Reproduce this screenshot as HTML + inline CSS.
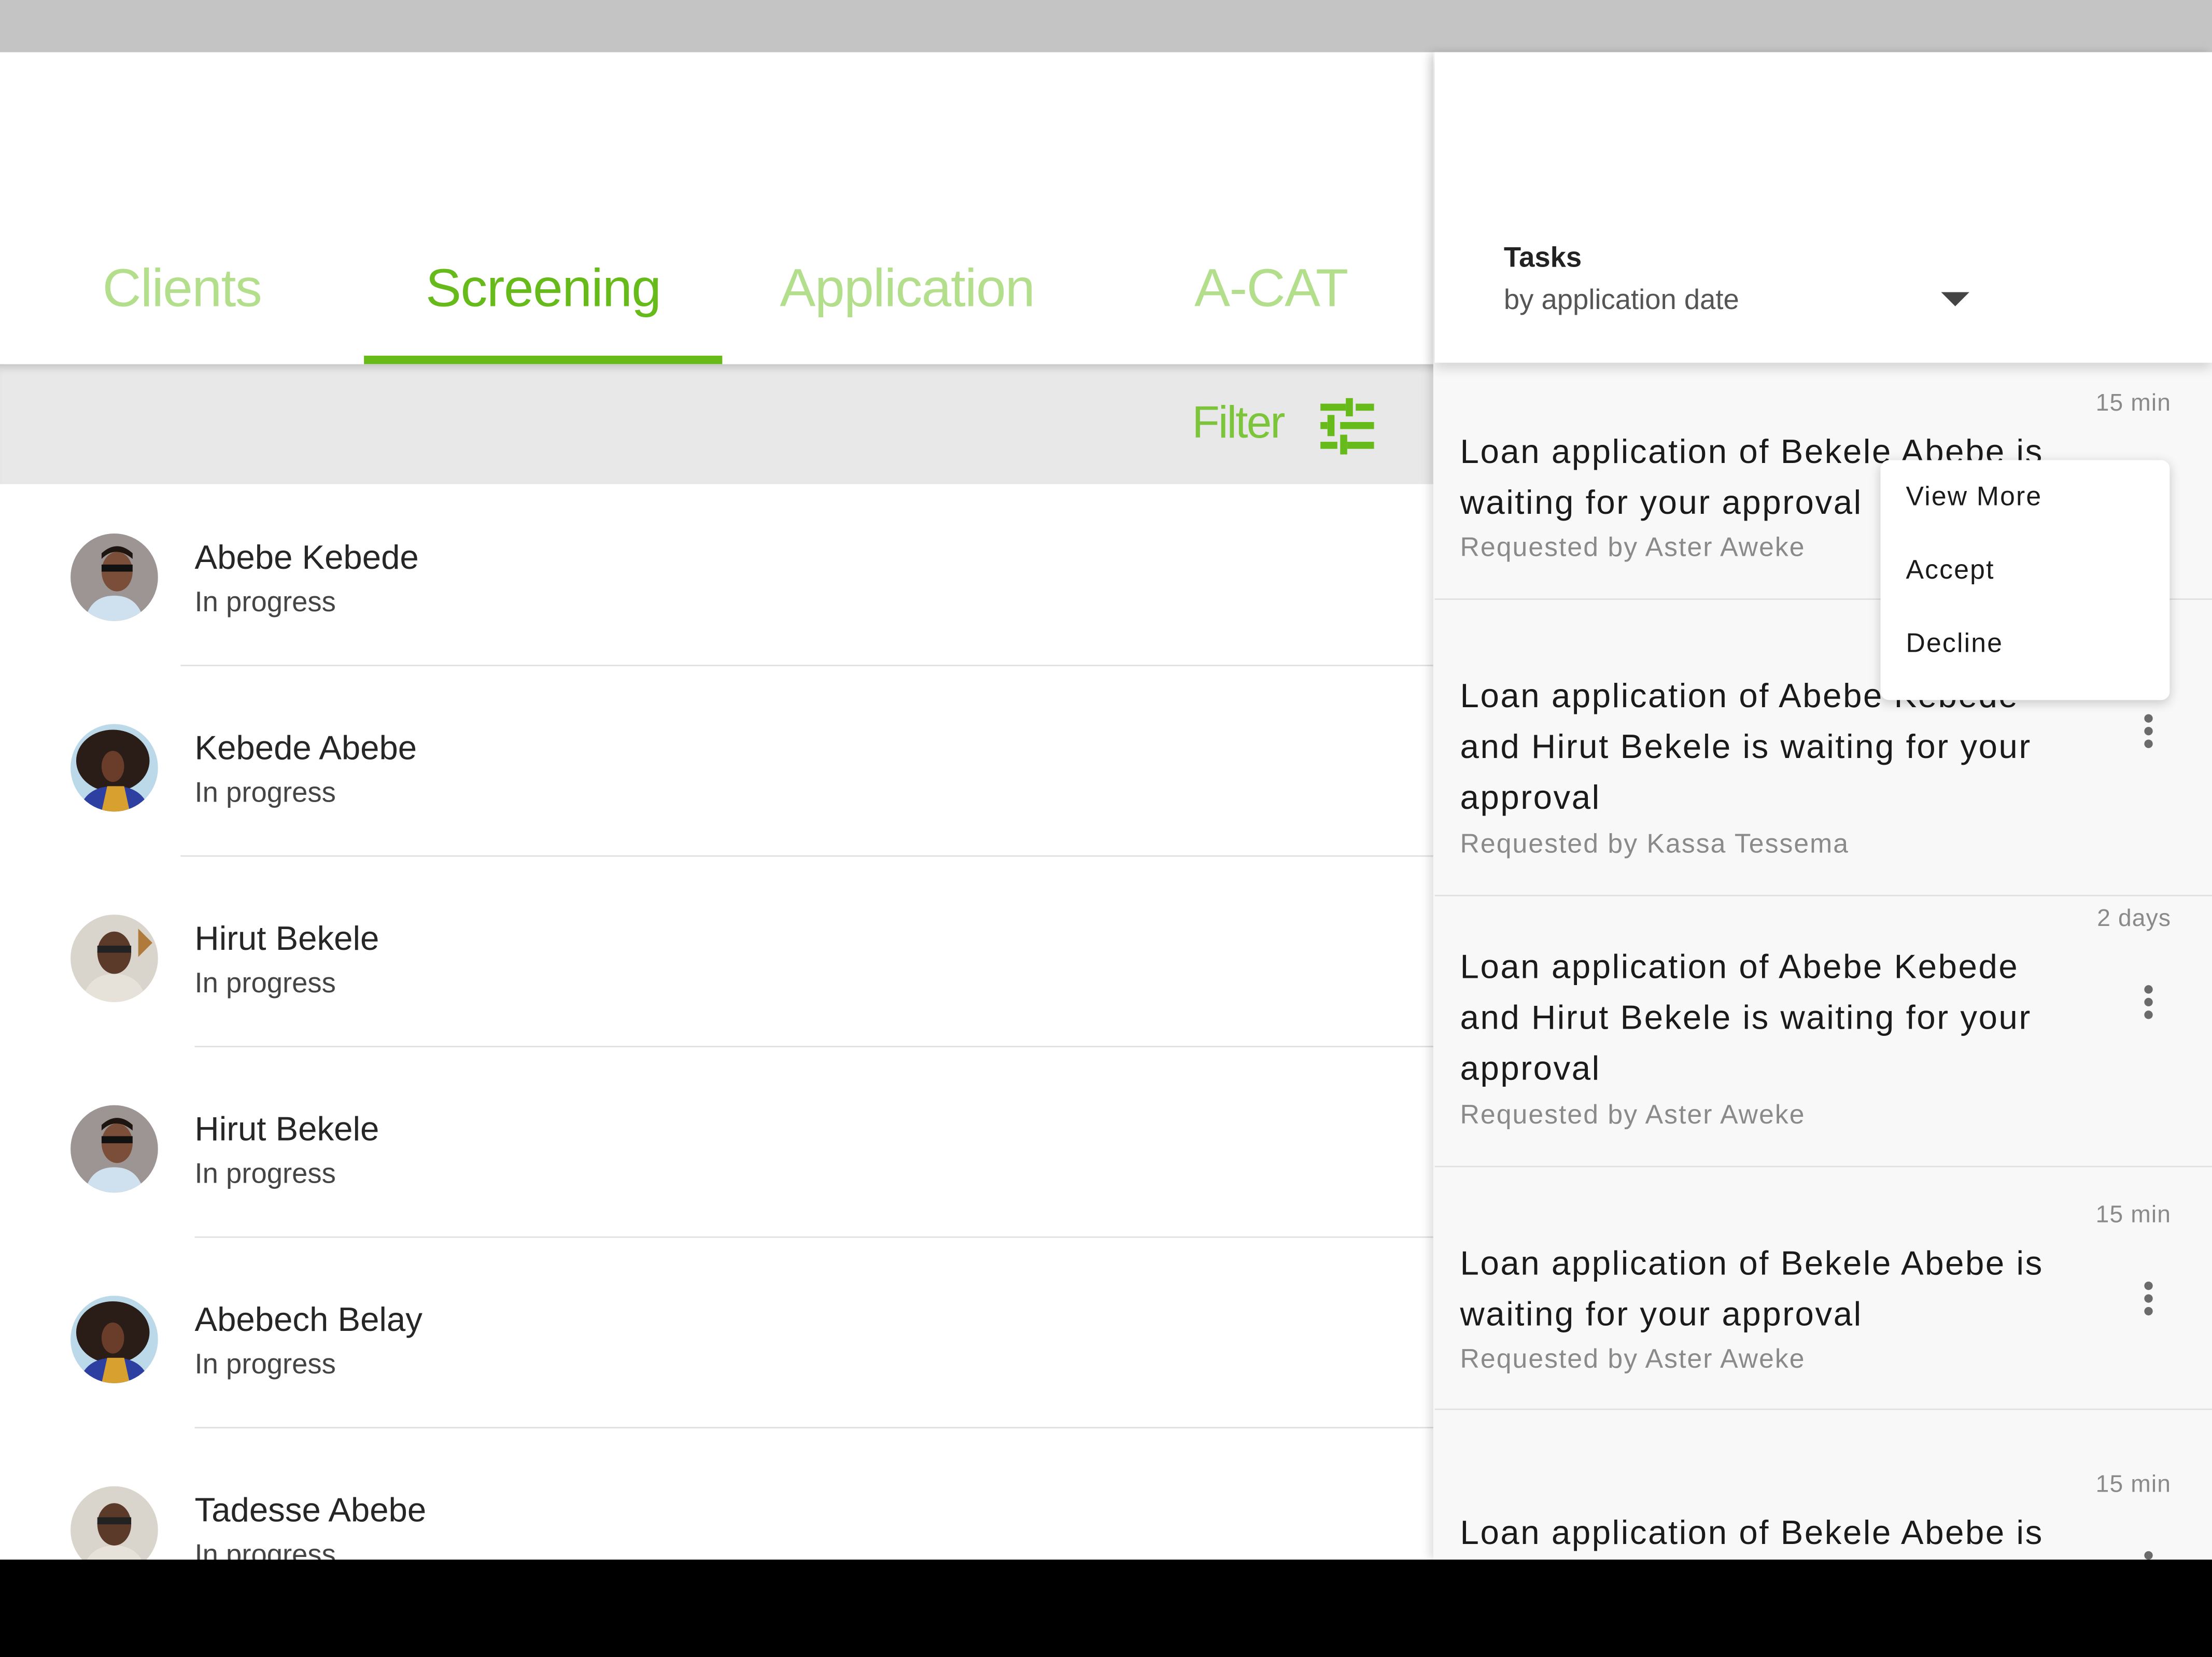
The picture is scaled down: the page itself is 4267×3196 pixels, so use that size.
<!DOCTYPE html>
<html><head><meta charset="utf-8">
<style>
html,body{margin:0;padding:0;width:4267px;height:3196px;overflow:hidden;background:#000;}
#w{position:absolute;left:0;top:0;width:1568px;height:1174px;transform:scale(2.72130,2.72232);transform-origin:0 0;overflow:hidden;font-family:"Liberation Sans",sans-serif;background:#fff;}
.a{position:absolute;white-space:nowrap;}
.tab{position:absolute;top:184px;font-size:38px;color:#b3df8c;width:258px;text-align:center;letter-spacing:-0.5px}
.name{font-size:24px;color:#262626;left:138px;}
.sub{font-size:20px;color:#444;left:138px;}
.div{position:absolute;height:1px;background:#e0e0e0;}
.t{font-size:24px;color:#1a1a1a;left:1035px;letter-spacing:0.95px}
.r{font-size:19px;color:#8a8a8a;left:1035px;letter-spacing:0.75px}
.tm{font-size:17px;color:#8a8a8a;right:29px;letter-spacing:0.4px}
.k{position:absolute;left:1520px;width:6px;height:6px;border-radius:3px;background:#6b6b6b;}
.m{font-size:19px;color:#1a1a1a;left:1351px;letter-spacing:0.8px}
</style></head><body><div id="w">
<div class="a" style="left:0;top:0;width:1568px;height:37px;background:#c4c4c4"></div>
<div class="tab" style="left:0">Clients</div>
<div class="tab" style="left:256px;color:#66bb1a">Screening</div>
<div class="tab" style="left:514px">Application</div>
<div class="tab" style="left:772px">A-CAT</div>
<div class="a" style="left:258px;top:252px;width:254px;height:6px;background:#68ba18"></div>
<div class="a" style="left:0;top:258px;width:1016px;height:85px;background:#e8e8e8;box-shadow:inset 0 6px 6px -4px rgba(0,0,0,0.18)"></div>
<div class="a" style="left:845px;top:281px;font-size:32px;color:#7cc43a;letter-spacing:-1px">Filter</div>
<svg class="a" style="left:934px;top:282px" width="42" height="40" viewBox="0 0 42 40" fill="#66bb1a">
<rect x="2" y="4" width="18" height="5"/><rect x="27" y="4" width="13" height="5"/><rect x="20" y="0" width="5" height="13"/>
<rect x="2" y="17" width="5" height="5"/><rect x="16" y="17" width="24" height="5"/><rect x="7" y="12" width="5" height="15"/>
<rect x="2" y="31" width="12" height="5"/><rect x="21" y="31" width="19" height="5"/><rect x="16" y="26" width="5" height="14"/>
</svg>
<svg width="0" height="0" style="position:absolute"><defs>
<clipPath id="c"><circle cx="31" cy="31" r="31"/></clipPath></defs></svg>
<svg class="a" style="left:50px;top:378px" width="62" height="62"><g clip-path="url(#c)"><rect width="62" height="62" fill="#9c9593"/><path d="M10 62 Q14 44 31 44 Q48 44 52 62Z" fill="#cfe0ee"/><ellipse cx="33" cy="27" rx="11" ry="14" fill="#7a4e38"/><path d="M22 18 Q32 8 44 18 L44 14 Q33 4 22 14Z" fill="#1e1410"/><rect x="22" y="22" width="22" height="5" fill="#111"/></g></svg>
<div class="a name" style="top:382px">Abebe Kebede</div><div class="a sub" style="top:416px">In progress</div>
<div class="div" style="left:128px;top:471px;width:888px"></div>
<svg class="a" style="left:50px;top:513px" width="62" height="62"><g clip-path="url(#c)"><rect width="62" height="62" fill="#bcd9ea"/><ellipse cx="30" cy="26" rx="26" ry="22" fill="#2a1d18"/><path d="M6 62 Q10 44 31 44 Q52 44 56 62Z" fill="#2d3fa0"/><path d="M22 62 L26 44 L38 44 L42 62Z" fill="#d8a12f"/><ellipse cx="30" cy="30" rx="8" ry="11" fill="#6a3d2a"/></g></svg>
<div class="a name" style="top:517px">Kebede Abebe</div><div class="a sub" style="top:551px">In progress</div>
<div class="div" style="left:128px;top:606px;width:888px"></div>
<svg class="a" style="left:50px;top:648px" width="62" height="62"><g clip-path="url(#c)"><rect width="62" height="62" fill="#d9d4cc"/><path d="M8 62 Q12 42 31 42 Q50 42 54 62Z" fill="#e6e2da"/><ellipse cx="31" cy="27" rx="12" ry="15" fill="#5b3a2a"/><rect x="19" y="22" width="24" height="5" fill="#222"/><path d="M48 10 L58 20 L48 30Z" fill="#b07a3a"/></g></svg>
<div class="a name" style="top:652px">Hirut Bekele</div><div class="a sub" style="top:686px">In progress</div>
<div class="div" style="left:138px;top:741px;width:878px"></div>
<svg class="a" style="left:50px;top:783px" width="62" height="62"><g clip-path="url(#c)"><rect width="62" height="62" fill="#9c9593"/><path d="M10 62 Q14 44 31 44 Q48 44 52 62Z" fill="#cfe0ee"/><ellipse cx="33" cy="27" rx="11" ry="14" fill="#7a4e38"/><path d="M22 18 Q32 8 44 18 L44 14 Q33 4 22 14Z" fill="#1e1410"/><rect x="22" y="22" width="22" height="5" fill="#111"/></g></svg>
<div class="a name" style="top:787px">Hirut Bekele</div><div class="a sub" style="top:821px">In progress</div>
<div class="div" style="left:138px;top:876px;width:878px"></div>
<svg class="a" style="left:50px;top:918px" width="62" height="62"><g clip-path="url(#c)"><rect width="62" height="62" fill="#bcd9ea"/><ellipse cx="30" cy="26" rx="26" ry="22" fill="#2a1d18"/><path d="M6 62 Q10 44 31 44 Q52 44 56 62Z" fill="#2d3fa0"/><path d="M22 62 L26 44 L38 44 L42 62Z" fill="#d8a12f"/><ellipse cx="30" cy="30" rx="8" ry="11" fill="#6a3d2a"/></g></svg>
<div class="a name" style="top:922px">Abebech Belay</div><div class="a sub" style="top:956px">In progress</div>
<div class="div" style="left:138px;top:1011px;width:878px"></div>
<svg class="a" style="left:50px;top:1053px" width="62" height="62"><g clip-path="url(#c)"><rect width="62" height="62" fill="#d9d4cc"/><path d="M8 62 Q12 42 31 42 Q50 42 54 62Z" fill="#e6e2da"/><ellipse cx="31" cy="27" rx="12" ry="15" fill="#5b3a2a"/><rect x="19" y="22" width="24" height="5" fill="#222"/></g></svg>
<div class="a name" style="top:1057px">Tadesse Abebe</div><div class="a sub" style="top:1091px">In progress</div>
<div class="a" style="left:1016px;top:37px;width:552px;height:1068px;background:#f8f8f8;box-shadow:-3px 0 6px rgba(0,0,0,0.12)"></div>
<div class="a" style="left:1017px;top:37px;width:551px;height:220px;background:#fff;box-shadow:0 4px 8px rgba(0,0,0,0.15)"></div>
<div class="a" style="left:1066px;top:172px;font-size:20px;font-weight:bold;color:#222">Tasks</div>
<div class="a" style="left:1066px;top:202px;font-size:20px;color:#555">by application date</div>
<div class="a" style="left:1376px;top:207px;width:0;height:0;border-left:10px solid transparent;border-right:10px solid transparent;border-top:10px solid #444"></div>

<div class="a tm" style="top:276px">15 min</div>
<div class="a t" style="top:307px">Loan application of Bekele Abebe is</div>
<div class="a t" style="top:343px">waiting for your approval</div>
<div class="a r" style="top:378px">Requested by Aster Aweke</div>
<div class="div" style="left:1017px;top:424px;width:551px"></div>

<div class="a t" style="top:480px">Loan application of Abebe Kebede</div>
<div class="a t" style="top:516px">and Hirut Bekele is waiting for your</div>
<div class="a t" style="top:552px">approval</div>
<div class="a r" style="top:588px">Requested by Kassa Tessema</div>
<div class="k" style="top:506px"></div><div class="k" style="top:515px"></div><div class="k" style="top:524px"></div>
<div class="div" style="left:1017px;top:634px;width:551px"></div>

<div class="a tm" style="top:641px">2 days</div>
<div class="a t" style="top:672px">Loan application of Abebe Kebede</div>
<div class="a t" style="top:708px">and Hirut Bekele is waiting for your</div>
<div class="a t" style="top:744px">approval</div>
<div class="a r" style="top:780px">Requested by Aster Aweke</div>
<div class="k" style="top:698px"></div><div class="k" style="top:707px"></div><div class="k" style="top:716px"></div>
<div class="div" style="left:1017px;top:826px;width:551px"></div>

<div class="a tm" style="top:851px">15 min</div>
<div class="a t" style="top:882px">Loan application of Bekele Abebe is</div>
<div class="a t" style="top:918px">waiting for your approval</div>
<div class="a r" style="top:953px">Requested by Aster Aweke</div>
<div class="k" style="top:908px"></div><div class="k" style="top:917px"></div><div class="k" style="top:926px"></div>
<div class="div" style="left:1017px;top:998px;width:551px"></div>

<div class="a tm" style="top:1042px">15 min</div>
<div class="a t" style="top:1073px">Loan application of Bekele Abebe is</div>
<div class="k" style="top:1099px"></div>

<div class="a" style="left:1333px;top:326px;width:205px;height:170px;background:#fff;border-radius:6px;box-shadow:0 2px 8px rgba(0,0,0,0.2)"></div>
<div class="a m" style="top:342px">View More</div>
<div class="a m" style="top:394px">Accept</div>
<div class="a m" style="top:446px">Decline</div>

<div class="a" style="left:0;top:1105px;width:1568px;height:69px;background:#000"></div>
</div></body></html>
